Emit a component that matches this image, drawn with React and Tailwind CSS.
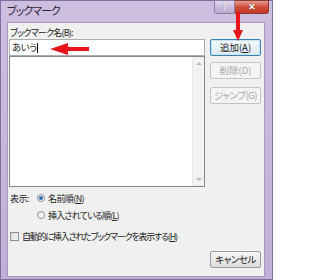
import React from "react";

const font = { fontFamily: '"Noto Sans CJK JP", "Noto Sans", sans-serif' };

function WinButton({ children, primary, disabled, className = "" }) {
  return (
    <div
      className={`h-[17px] w-[51px] rounded-[2px] border flex items-center justify-center text-[9.5px] leading-none [font-feature-settings:'palt'] ${
        primary
          ? "border-[#3c7fb1] bg-gradient-to-b from-[#f4f9fd] to-[#dbe9f5] text-[#1a1a1a] shadow-[inset_0_0_0_1px_#c6e4f7]"
          : disabled
          ? "border-[#c1c4c8] bg-[#f4f4f4] text-[#a6a6a6]"
          : "border-[#9a9a9a] bg-gradient-to-b from-[#f6f6f6] to-[#dddddd] text-[#1a1a1a]"
      } ${className}`}
    >
      {children}
    </div>
  );
}

function Radio({ checked }) {
  return (
    <div className="w-[8px] h-[8px] shrink-0 rounded-full border border-[#8c8f94] bg-gradient-to-br from-[#e6e6e6] to-white flex items-center justify-center">
      {checked && <div className="w-[4px] h-[4px] rounded-full bg-[#2d6fb3]" />}
    </div>
  );
}

export default function App() {
  return (
    <div
      className="relative w-[273px] h-[280px] bg-gradient-to-b from-[#cdbfe0] to-[#c0afd8] border border-[#7f6f9c] flex flex-col text-[#222]"
      style={font}
    >
      {/* title bar */}
      <div className="h-[21px] flex items-start shrink-0">
        <span className="pl-[6px] pt-[3px] text-[11px] leading-[13px] text-[#2a2438] [font-feature-settings:'palt'] tracking-[-1px]">
          ブックマーク
        </span>
        <div className="ml-auto mr-[3px] flex -mt-px">
          <div className="w-[21px] h-[14px] rounded-bl-[3px] border border-[#8d7ea8] bg-gradient-to-b from-[#e0d6ec] to-[#b9a8d0] text-white text-[9px] font-bold leading-[12px] text-center [text-shadow:0_0_1px_#444]">
            ?
          </div>
          <div className="w-[34px] h-[14px] rounded-br-[3px] border border-l-0 border-[#8b3a36] bg-gradient-to-b from-[#e69d8e] via-[#cf4a38] to-[#c03a2a] text-white text-[9px] font-bold leading-[12px] text-center [text-shadow:0_0_1px_#333]">
            ✕
          </div>
        </div>
      </div>

      {/* client area */}
      <div className="ml-[6px] mr-[7px] mb-[2px] flex-1 bg-[#f0f0f0] border border-[#a898bf] flex pl-px pb-[8px]">
        <div className="w-[196px] flex flex-col text-[9px] leading-none [font-feature-settings:'palt']">
          <div className="mt-[4px] h-[11px] pl-[1px] leading-[11px] tracking-[-0.8px]">
            ブックマーク名(B):
          </div>
          <div className="mt-[1px] h-[17px] border border-[#abadb3] bg-white flex items-center pl-[2px] text-[9.5px] tracking-[-0.5px]">
            あいう<span className="w-px h-[10px] bg-black" />
          </div>
          <div className="h-[131px] border border-[#828790] bg-white flex justify-end">
            <div className="w-[12px] bg-[#f2f2f2] border-l border-[#e6e6e6] flex flex-col items-center justify-between py-[5px]">
              <div className="w-0 h-0 border-l-[3px] border-r-[3px] border-b-[3px] border-l-transparent border-r-transparent border-b-[#b8b8b8]" />
              <div className="w-0 h-0 border-l-[3px] border-r-[3px] border-t-[3px] border-l-transparent border-r-transparent border-t-[#b8b8b8]" />
            </div>
          </div>
          <div className="mt-[5px] flex items-center h-[12px] tracking-[-0.6px]">
            <span className="pl-[1px] w-[28px]">表示:</span>
            <Radio checked />
            <span className="ml-[3px]">
              名前順(<span className="underline">N</span>)
            </span>
          </div>
          <div className="mt-[5px] flex items-center h-[12px] pl-[28px] tracking-[-0.8px]">
            <Radio />
            <span className="ml-[3px]">
              挿入されている順(<span className="underline">L</span>)
            </span>
          </div>
          <div className="mt-[9px] flex items-center h-[12px] pl-[1px] tracking-[-1.2px]">
            <div className="w-[9px] h-[9px] shrink-0 border border-[#8f8f8f] bg-gradient-to-br from-[#dedede] to-[#f8f8f8]" />
            <span className="ml-[3px] whitespace-nowrap">
              自動的に挿入されたブックマークを表示する(<span className="underline">H</span>)
            </span>
          </div>
        </div>

        <div className="ml-[5px] flex flex-col pt-[16px]">
          <WinButton primary>
            <span>
              追加(<span className="underline">A</span>)
            </span>
          </WinButton>
          <WinButton disabled className="mt-[6px]">
            削除(D)
          </WinButton>
          <WinButton disabled className="mt-[8px]">
            <span className="tracking-[-0.5px]">ジャンプ(G)</span>
          </WinButton>
          <WinButton className="mt-auto">
            <span className="tracking-[-0.5px]">キャンセル</span>
          </WinButton>
        </div>
      </div>

      {/* red annotation arrows */}
      <svg className="absolute left-[49px] top-[42px]" width="40" height="12" viewBox="0 0 40 12">
        <polygon points="0,6 18,0 18,4 39,4 39,8 18,8 18,12" fill="#e8141c" />
      </svg>
      <svg className="absolute left-[232px] top-[11px]" width="10" height="30" viewBox="0 0 10 30">
        <polygon points="3,0 7,0 7,18 10,18 5,29 0,18 3,18" fill="#e8141c" />
      </svg>
    </div>
  );
}
